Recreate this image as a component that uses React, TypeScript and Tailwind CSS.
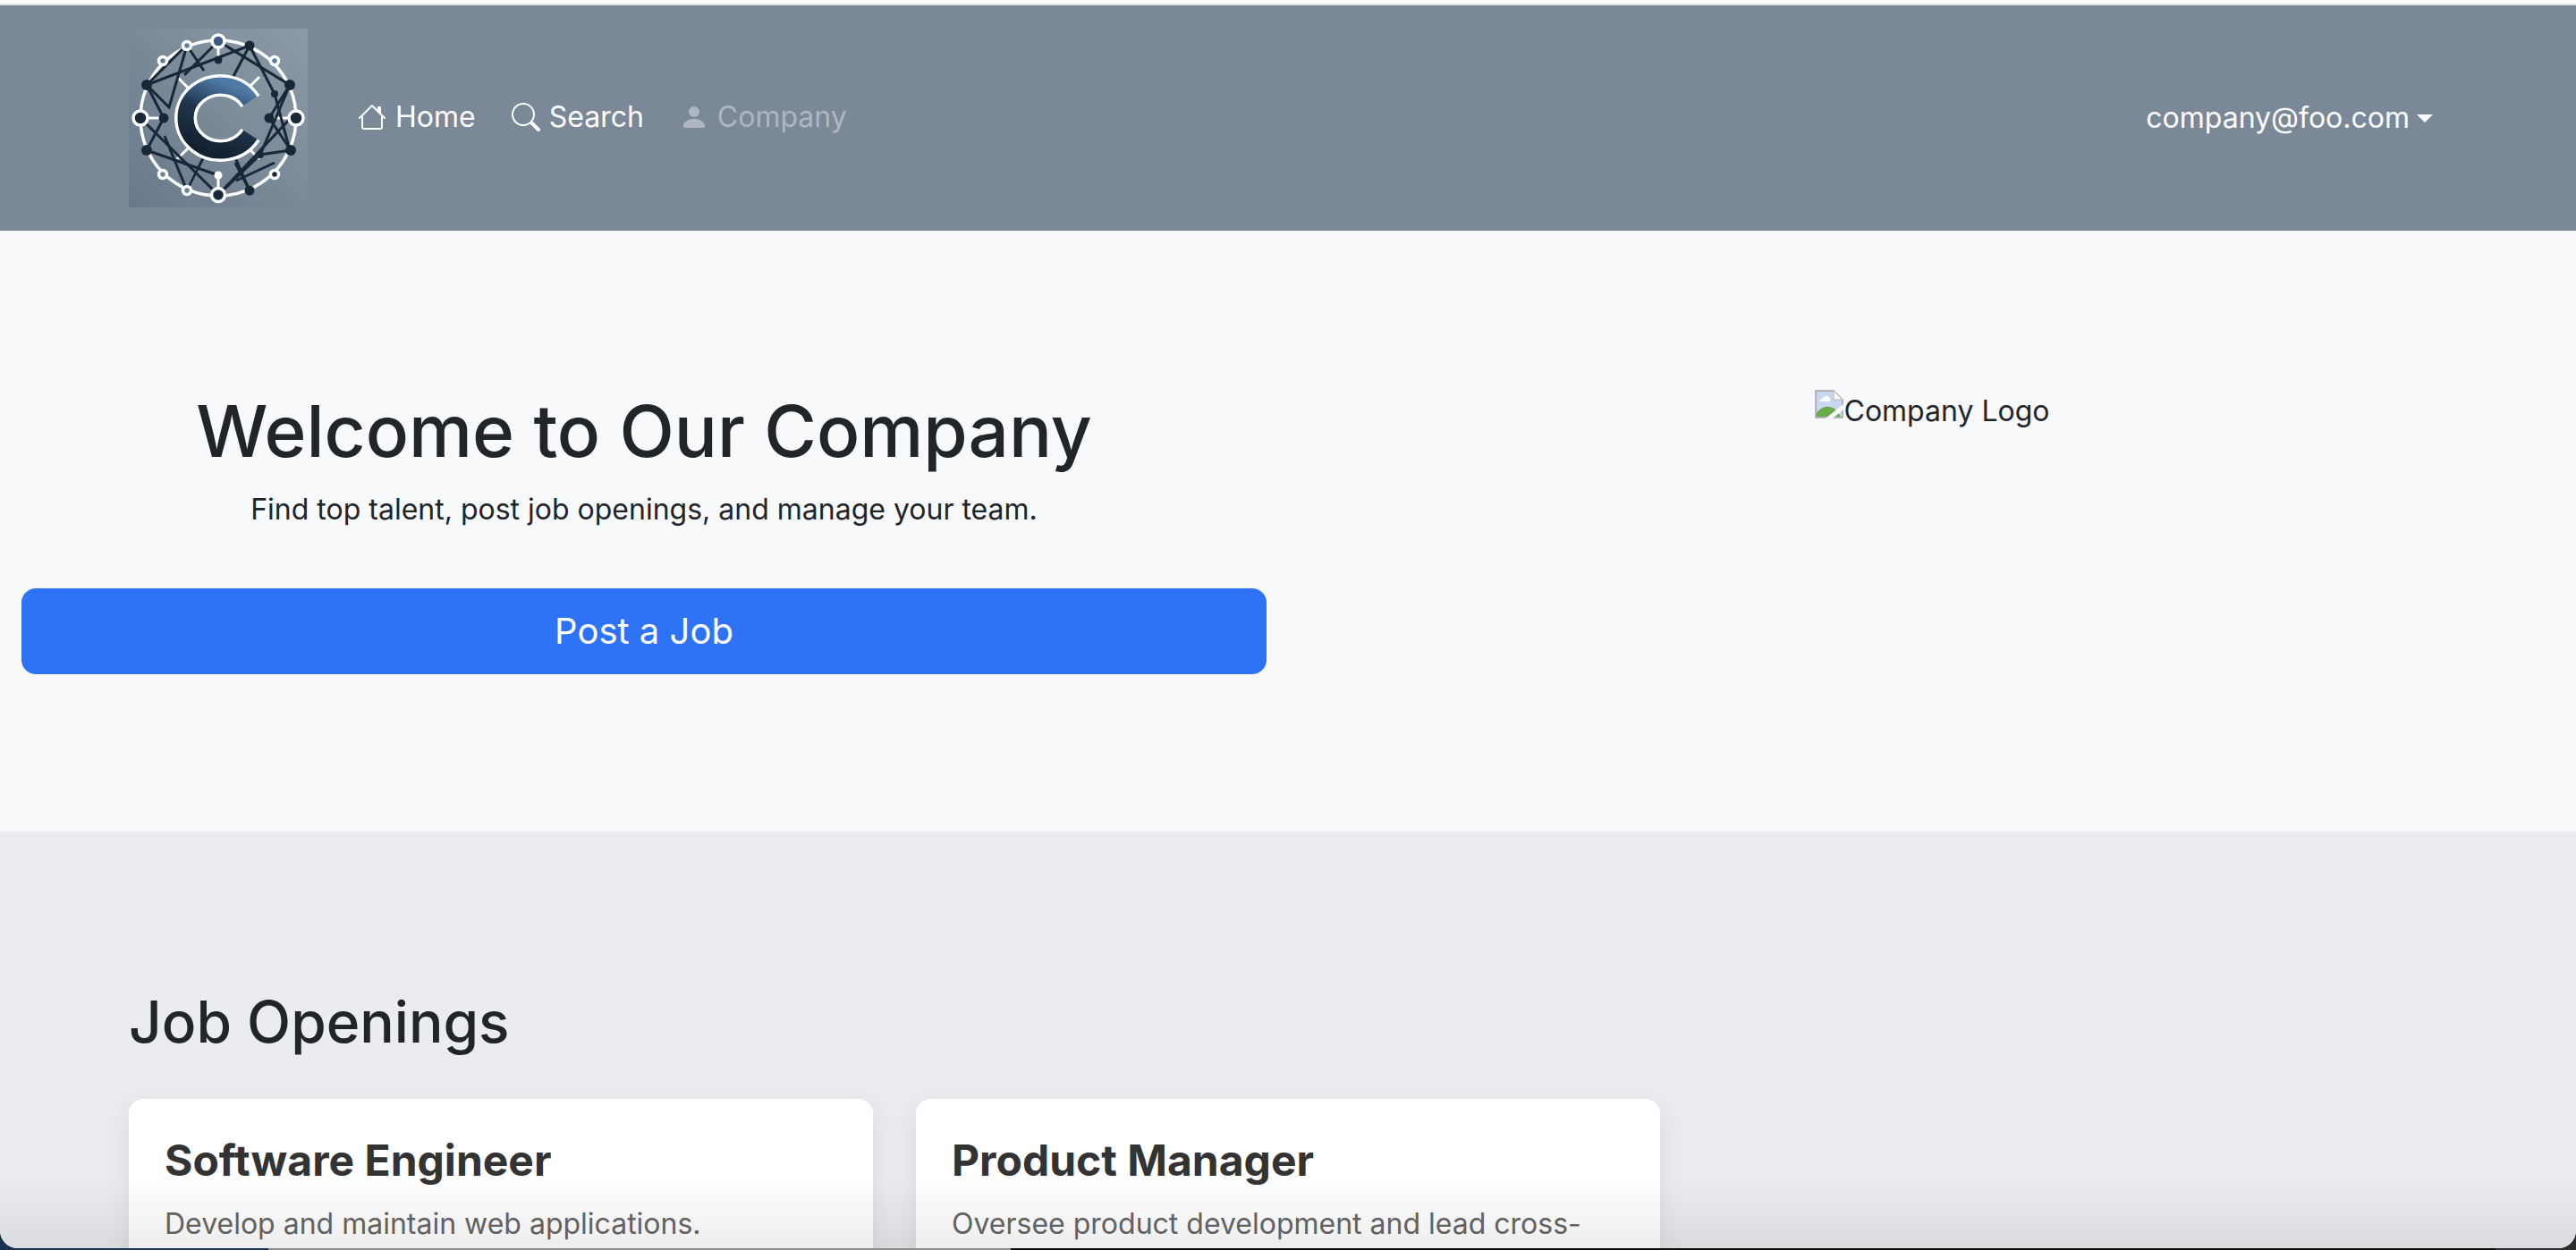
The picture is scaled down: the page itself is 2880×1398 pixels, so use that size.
import React from 'react';
import { BsHouse, BsSearch, BsPersonFill } from 'react-icons/bs';

const ringNodes = [
  { x: 100, y: 14, r: 7, fill: '#3d5a80' },
  { x: 65, y: 19, r: 4.5, fill: '#5d7f9c' },
  { x: 38, y: 36, r: 4.5, fill: '#5d7f9c' },
  { x: 13, y: 100, r: 8, fill: '#182838' },
  { x: 38, y: 163, r: 4.5, fill: '#6d8296' },
  { x: 65, y: 181, r: 4.5, fill: '#6d8296' },
  { x: 100, y: 186, r: 7.5, fill: '#182838' },
  { x: 163, y: 163, r: 4.5, fill: '#182838' },
  { x: 187, y: 100, r: 8, fill: '#182838' },
  { x: 163, y: 36, r: 4.5, fill: '#5d7f9c' },
];

const darkNodes = [
  [135, 19, 5.5], [20, 63, 6], [20, 136, 6], [135, 181, 5.5], [181, 136, 6], [180, 63, 6],
  [100, 35, 4.5], [39, 100, 5.5], [157, 100, 5.5], [163, 73, 4], [147, 141, 4],
];

const darkLines = [
  'M135 19L20 63', 'M135 19L115 57', 'M135 19L163 73L180 136', 'M100 14L180 63', 'M65 19L84 47', 'M100 14L62 52',
  'M65 19L45 88L20 63', 'M20 63L39 100L20 136', 'M20 63L60 23', 'M13 100L100 186', 'M20 136L100 164', 'M40 120L65 181',
  'M100 186L147 141L181 136', 'M100 186L181 100', 'M180 63L157 100L181 136', 'M180 63L147 141', 'M135 181L115 135', 'M135 181L119 150',
  'M65 181L88 135', 'M120 170L163 150',
];

const whiteSpokes = ['M13 100H39', 'M187 100H157', 'M100 14V35', 'M100 186V164', 'M54 54L68 68', 'M146 54L132 68', 'M54 146L68 132', 'M65 181L78 155', 'M146 146L132 132'];

const cArc = 'M136 81.3A39 36.5 0 1 0 136 118.7';

function CompanyMark() {
  return (
    <svg viewBox="0 0 200 200" className="w-[200px] h-[200px] shrink-0">
      <defs>
        <linearGradient id="logoBg" x1="1" y1="0" x2="0" y2="1">
          <stop offset="0" stopColor="#8d9ba7" />
          <stop offset="1" stopColor="#68798a" />
        </linearGradient>
        <linearGradient id="logoC" x1="0.7" y1="0" x2="0.3" y2="1">
          <stop offset="0" stopColor="#4f7aa6" />
          <stop offset="0.45" stopColor="#20364f" />
          <stop offset="1" stopColor="#13202f" />
        </linearGradient>
      </defs>
      <rect width="200" height="200" fill="url(#logoBg)" />
      <circle cx="100" cy="100" r="87" fill="none" stroke="#fff" strokeWidth="3.5" />
      {whiteSpokes.map((d) => (
        <path key={d} d={d} stroke="#fff" strokeWidth="3" fill="none" />
      ))}
      {darkLines.map((d) => (
        <path key={d} d={d} stroke="#182838" strokeWidth="3" fill="none" />
      ))}
      {ringNodes.map((n) => (
        <circle key={`${n.x}-${n.y}`} cx={n.x} cy={n.y} r={n.r} fill={n.fill} stroke="#fff" strokeWidth="3.5" />
      ))}
      {darkNodes.map(([x, y, r]) => (
        <circle key={`${x}-${y}`} cx={x} cy={y} r={r} fill="#182838" />
      ))}
      <circle cx="100" cy="164" r="4.5" fill="#fff" />
      <path d={cArc} fill="none" stroke="#fff" strokeWidth="25" />
      <path d={cArc} fill="none" stroke="url(#logoC)" strokeWidth="18" />
    </svg>
  );
}

function BrokenImage() {
  return (
    <svg viewBox="0 0 32 32" className="w-8 h-8 shrink-0">
      <path d="M1 1H21L31 11V31H1Z" fill="#c9d7f0" stroke="#a3a3a3" strokeWidth="1.5" />
      <path d="M21 1V11H31Z" fill="#fff" stroke="#b5b5b5" strokeWidth="1" />
      <path d="M6 13C6 10 8 9 10 9C11 6 15 6 16 9C18 9 18 13 16 13Z" fill="#fff" />
      <path d="M2 30V26C6 20 12 18 16 19C22 19 26 25 29 30Z" fill="#6aaa4b" />
      <path d="M12 32L32 16V22L20 32Z" fill="#f8f9fb" />
    </svg>
  );
}

const navItems = [
  { label: 'Home', icon: BsHouse, muted: false },
  { label: 'Search', icon: BsSearch, muted: false },
  { label: 'Company', icon: BsPersonFill, muted: true },
];

const jobs = [
  { title: 'Software Engineer', text: 'Develop and maintain web applications.' },
  { title: 'Product Manager', text: 'Oversee product development and lead cross-functional teams.' },
];

export default function App() {
  return (
    <div className="relative h-[1398px] overflow-hidden font-['Inter',sans-serif] bg-[linear-gradient(90deg,#1b3153_0,#1b3153_300px,#8c8c8c_300px,#8c8c8c_1130px,#0d0d0d_1130px,#0d0d0d_2790px,#2d2d30_2790px)]">
      <div className="relative h-[1396px] overflow-hidden rounded-b-[20px] bg-white">
        <div className="h-1 bg-white" />
        <div className="h-0.5 bg-[#e4e4e4]" />
        <header className="h-[252px] bg-[#7b8898] flex items-center pl-36 pr-[160px] text-white text-[32px]">
          <CompanyMark />
          <nav className="flex items-center ml-[56px] gap-10 -mt-[2px]">
            {navItems.map((item) => (
              <a key={item.label} className={`flex items-center gap-2.5 ${item.muted ? 'text-[#aeb6bf]' : 'text-white'}`}>
                <item.icon className="w-8 h-8" />
                {item.label}
              </a>
            ))}
          </nav>
          <div className="ml-auto flex items-center gap-2">
            company@foo.com
            <span className="w-0 h-0 border-x-[9px] border-x-transparent border-t-[9px] border-t-white" />
          </div>
        </header>

        <section className="h-[672px] bg-[#f8f9fb] flex text-[#212529]">
          <div className="w-1/2 px-6 pt-[176px] flex flex-col items-center">
            <h1 className="text-[80px] leading-[96px] font-medium">Welcome to Our Company</h1>
            <p className="mt-4 text-[32px] leading-[48px]">Find top talent, post job openings, and manage your team.</p>
            <button className="mt-16 w-full h-24 rounded-2xl bg-[#2e72f5] text-white text-[40px]">Post a Job</button>
          </div>
          <div className="w-1/2 pt-[178px] flex justify-center">
            <div className="flex items-start text-[32px] leading-[48px]">
              <BrokenImage />
              <span className="ml-px">Company Logo</span>
            </div>
          </div>
        </section>

        <section className="bg-[#ebecf0] h-[466px] px-36 pt-[174px]">
          <h2 className="text-[64px] leading-[77px] font-medium text-[#212529]">Job Openings</h2>
          <div className="mt-12 grid grid-cols-3 gap-12">
            {jobs.map((job) => (
              <div key={job.title} className="bg-white rounded-2xl p-10 shadow-[0_8px_30px_rgba(0,0,0,0.08)]">
                <h3 className="text-[48px] leading-[58px] font-bold text-[#333]">{job.title}</h3>
                <p className="mt-[18px] text-[32px] leading-[48px] text-[#666]">{job.text}</p>
              </div>
            ))}
          </div>
        </section>

        <div className="absolute inset-x-0 bottom-0 h-[80px] bg-gradient-to-t from-black/[0.07] to-transparent pointer-events-none" />
      </div>
    </div>
  );
}
